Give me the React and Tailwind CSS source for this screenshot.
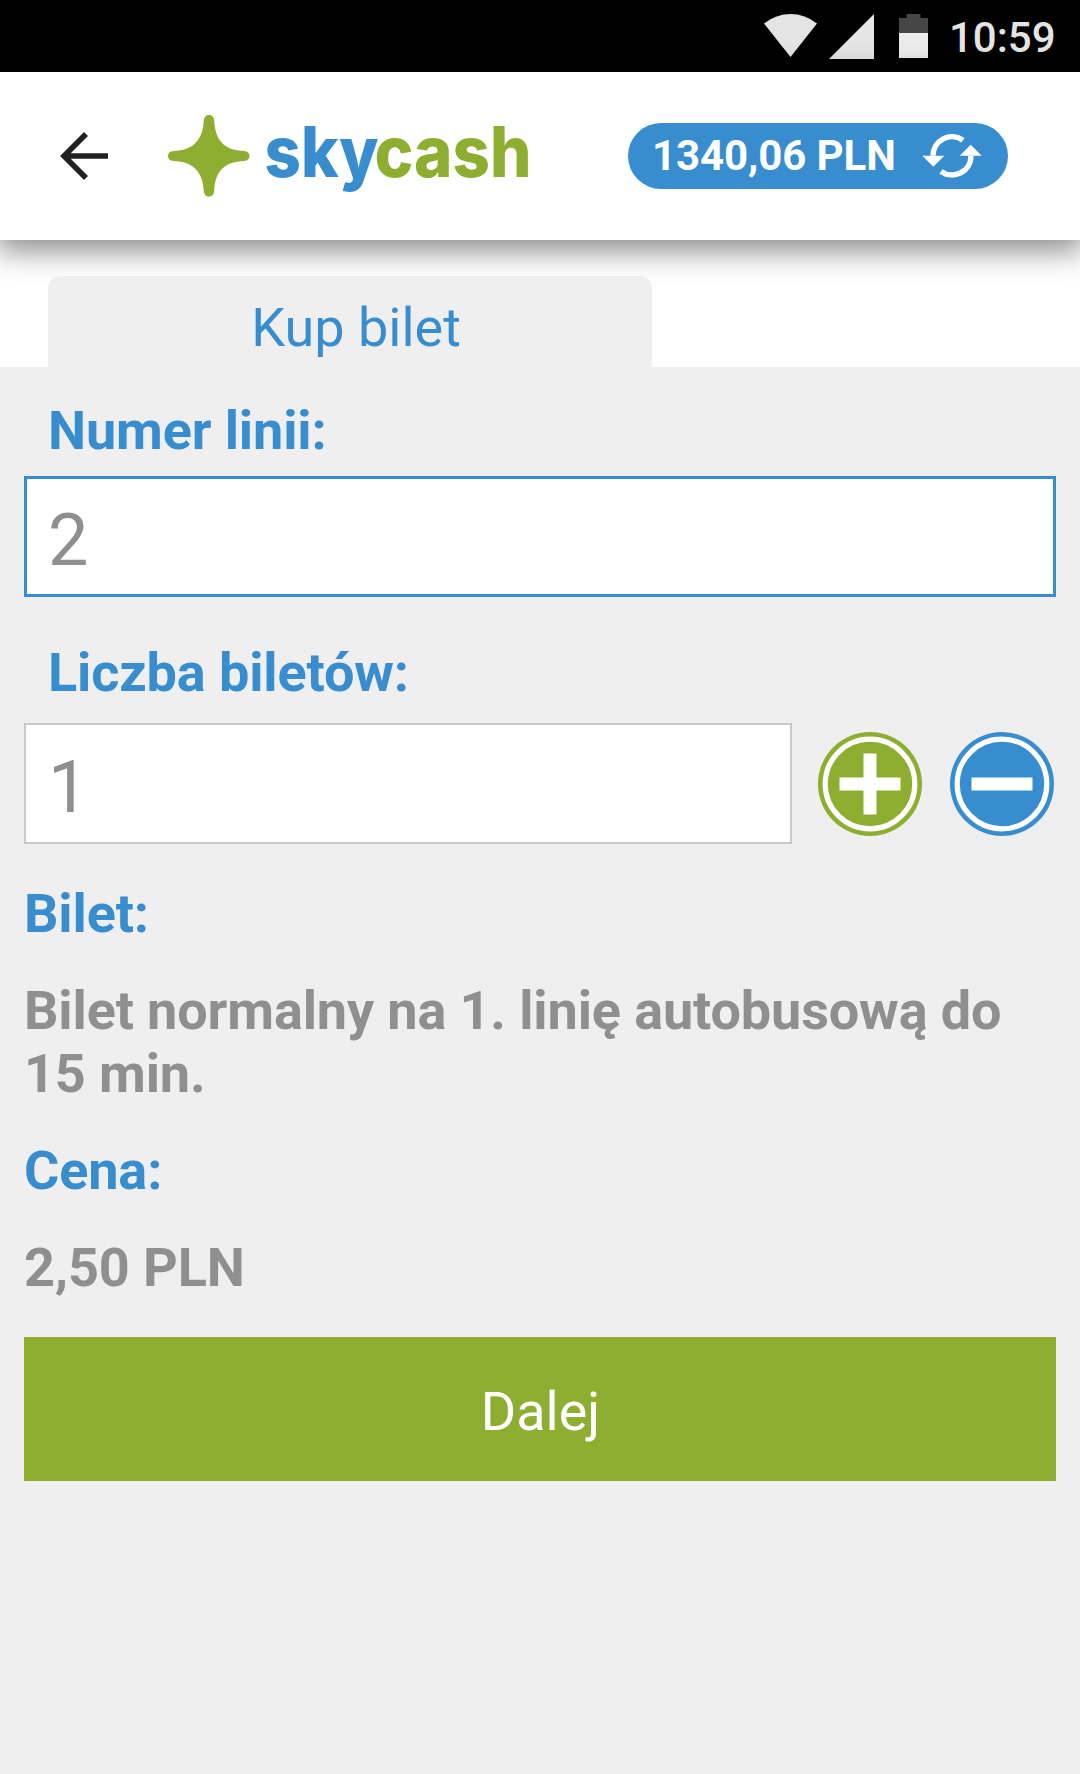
const LABEL = "text-[54px] leading-[63px] tracking-[-0.13px] font-bold text-[#378dce]";
const VALUE = "text-[54px] leading-[63px] tracking-[-0.13px] font-bold text-[#8f8f8f]";

function StatusBar() {
  return (
    <div className="flex h-[72px] shrink-0 items-start bg-black pl-[764px]">
      <svg className="mt-[14px] h-[43px] w-[53px]" viewBox="0 0 53 43">
        <path d="M0 9.5Q12 0 26.5 0T53 9.5L26.5 43Z" fill="#e4e4e4" />
      </svg>
      <svg className="mt-[14px] ml-[12px] h-[45px] w-[45px]" viewBox="0 0 45 45">
        <path d="M45 0V45H0Z" fill="#e4e4e4" />
      </svg>
      <svg className="mt-[14px] ml-[25px] h-[44px] w-[29px]" viewBox="0 0 29 44">
        <path d="M0 4H7.500V0H21.500V4H29V19H0Z" fill="#464646" />
        <path d="M0 19H29V44H0Z" fill="#ebebeb" />
      </svg>
      <span className="mt-[13px] ml-[21px] text-[42px] leading-[50px] font-medium text-[#e4e4e4]">10:59</span>
    </div>
  );
}

function Logo() {
  return (
    <svg className="ml-[58px] h-[96px] w-[370px]" viewBox="0 0 370 96">
      <path
        d="M41 7C44 7 46 9 46.200 12C47 32 56 42.500 76 43C79.500 43.300 81.500 45 81.500 48C81.500 51 79.500 52.700 76 53C56 53.500 47 64 46.200 83C46 86.500 44 88.500 41 88.500C38 88.500 36 86.500 35.800 83C35 64 25 53.500 5.500 53C2 52.700 0 51 0 48C0 45 2 43.300 5.500 43C25 42.500 35 32 35.800 12C36 9 38 7 41 7Z"
        fill="#8eae31"
      />
      <text x="96.500" y="68.500" textLength="114" lengthAdjust="spacingAndGlyphs" className="font-['Inter'] text-[70px] font-extrabold" fill="#378dce">sky</text>
      <text x="206.500" y="68.500" textLength="157" lengthAdjust="spacingAndGlyphs" className="font-['Inter'] text-[70px] font-extrabold" fill="#8eae31">cash</text>
    </svg>
  );
}

function Header() {
  return (
    <header className="relative z-10 flex h-[168px] shrink-0 items-center bg-white shadow-[0_8px_28px_3px_rgba(0,0,0,0.45)]">
      <svg className="ml-[60px] h-[48px] w-[50px]" viewBox="0 0 50 48" fill="none" stroke="#212121" strokeWidth="5.600">
        <path d="M48 24H5M26 2L4 24L26 46" />
      </svg>
      <Logo />
      <div className="ml-[90px] flex h-[66px] w-[380px] items-center rounded-full bg-[#378dce] pl-[24px]">
        <span className="text-[42px] leading-[50px] font-bold tracking-[-0.1px] whitespace-nowrap text-white">1340,06 PLN</span>
        <svg className="ml-auto mr-[26px] h-[44px] w-[60px]" viewBox="0 0 60 44" fill="none" stroke="#fff" strokeWidth="5.500">
          <path d="M41 6.200A19 19 0 0 0 11 21.800" />
          <path d="M0.300 21.800H22.300L11.300 32.800Z" fill="#fff" stroke="none" />
          <path d="M19 37.400A19 19 0 0 0 49 21.800" />
          <path d="M37.700 21.800H59.700L48.700 10.800Z" fill="#fff" stroke="none" />
        </svg>
      </div>
    </header>
  );
}

function RoundButton({ color, plus }) {
  return (
    <svg className="h-[106px] w-[106px]" viewBox="-53 -53 106 106">
      <circle r="52" fill={color} />
      <circle r="44.800" fill="none" stroke="#fff" strokeWidth="5.200" />
      <path d={plus ? "M-30.500 0H30.500M0 -30.500V30.500" : "M-30.500 0H30.500"} stroke="#fff" strokeWidth="13" />
    </svg>
  );
}

export default function App() {
  return (
    <div className="flex h-[1774px] w-[1080px] flex-col overflow-hidden bg-[#efefef] font-['Roboto',sans-serif]">
      <StatusBar />
      <Header />
      <div className="flex h-[127px] shrink-0 items-end bg-white pl-[48px]">
        <div className="relative z-20 h-[91px] w-[604px] rounded-t-[12px] bg-[#efefef] pt-[20px] pl-[12px] text-center text-[54px] leading-[63px] text-[#378dce]">
          Kup bilet
        </div>
      </div>
      <main className="flex flex-col px-[24px] pt-[32px]">
        <div className={`${LABEL} pl-[24px]`}>Numer linii:</div>
        <div className="mt-[14px] flex h-[121px] items-center border-3 border-[#378dce] bg-white pl-[21px] text-[72px] leading-[84px] text-[#8f8f8f]">
          <span className="pt-[8px]">2</span>
        </div>
        <div className={`${LABEL} mt-[44px] pl-[24px]`}>Liczba biletów:</div>
        <div className="mt-[19px] flex h-[121px] items-center">
          <div className="flex h-full w-[768px] items-center border-2 border-[#c9c9c9] bg-white pl-[22px] text-[72px] leading-[84px] text-[#8f8f8f]">
            <span className="pt-[8px]">1</span>
          </div>
          <div className="ml-[25px] flex gap-[26px]">
            <RoundButton color="#8eae31" plus />
            <RoundButton color="#378dce" />
          </div>
        </div>
        <div className={`${LABEL} mt-[38px]`}>Bilet:</div>
        <div className={`${VALUE} mt-[34px]`}>Bilet normalny na 1. linię autobusową do 15 min.</div>
        <div className={`${LABEL} mt-[34px]`}>Cena:</div>
        <div className={`${VALUE} mt-[34px]`}>2,50 PLN</div>
        <button className="mt-[38px] h-[144px] bg-[#8eae31] pt-[5px] pl-[1px] text-[54px] leading-[63px] text-white">Dalej</button>
      </main>
    </div>
  );
}
